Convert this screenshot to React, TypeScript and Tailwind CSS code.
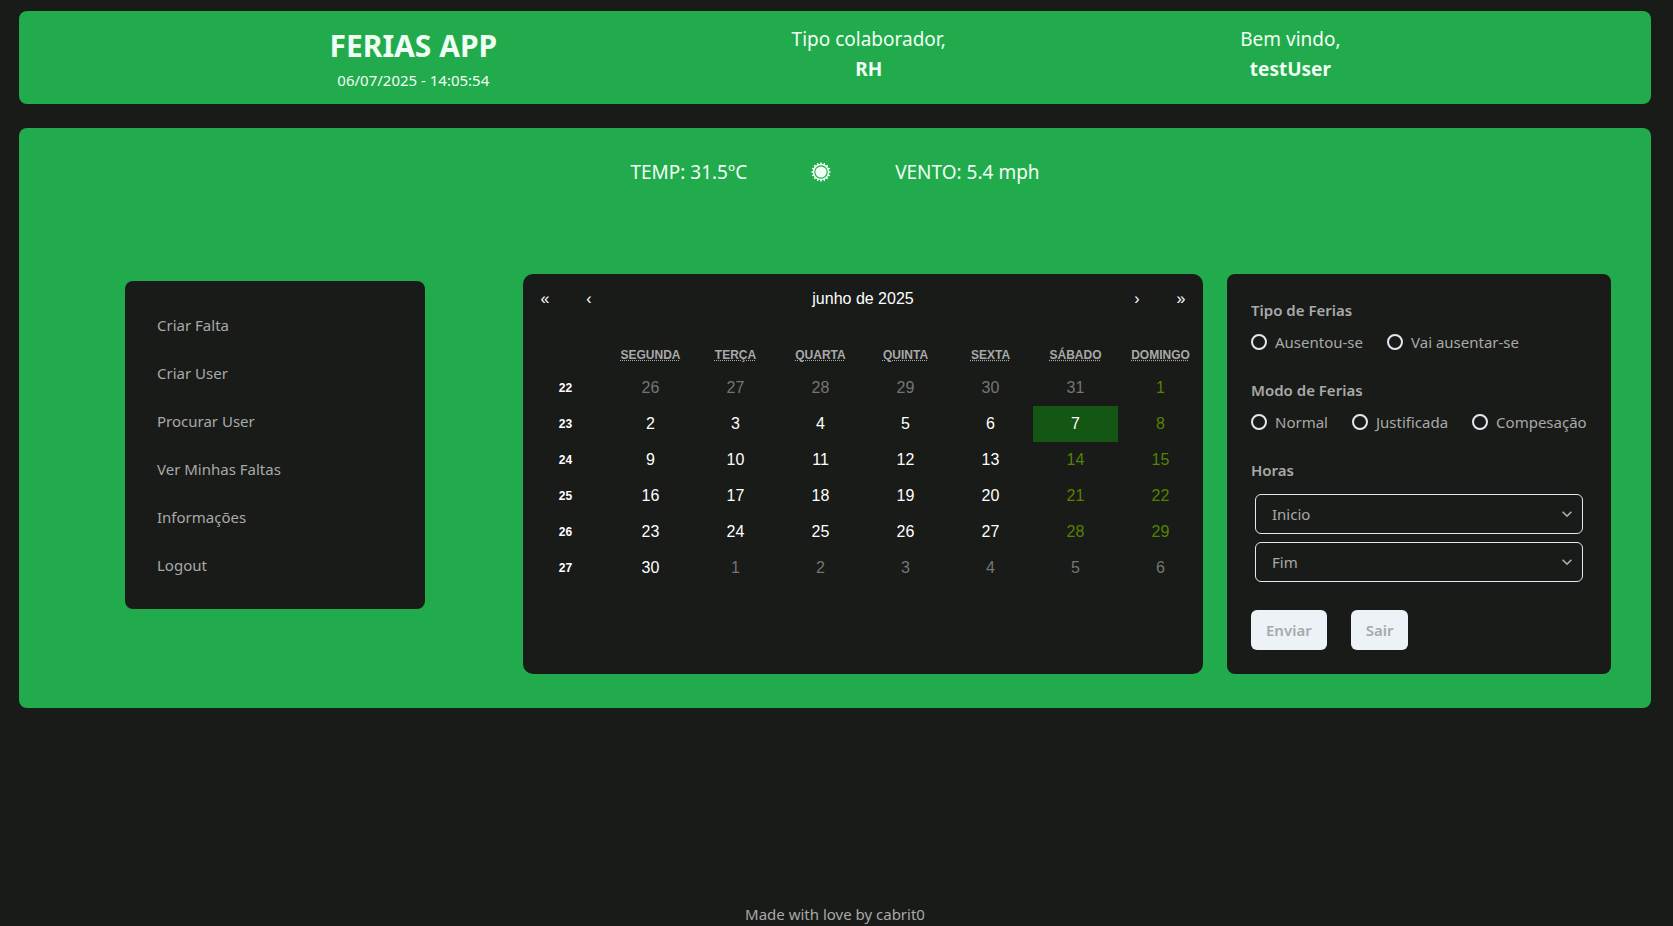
import React, { useState } from "react";

const menuItems = [
  "Criar Falta",
  "Criar User",
  "Procurar User",
  "Ver Minhas Faltas",
  "Informações",
  "Logout",
];

const weekdays = ["segunda", "terça", "quarta", "quinta", "sexta", "sábado", "domingo"];

const FIRST_WEEK = 22;
const DAYS_IN_MAY = 31;
const DAYS_IN_JUNE = 30;

type Day = { label: number; offset: number; outside: boolean };

function buildWeeks(): Day[][] {
  const weeks: Day[][] = [];
  for (let w = 0; w < 6; w++) {
    const week: Day[] = [];
    for (let d = 0; d < 7; d++) {
      const offset = w * 7 + d - 5;
      if (offset < 1) week.push({ label: DAYS_IN_MAY + offset, offset, outside: true });
      else if (offset > DAYS_IN_JUNE) week.push({ label: offset - DAYS_IN_JUNE, offset, outside: true });
      else week.push({ label: offset, offset, outside: false });
    }
    weeks.push(week);
  }
  return weeks;
}

const weeks = buildWeeks();

function dayColor(day: Day, column: number, selected: boolean): string {
  if (selected) return "bg-[#145614] text-white";
  if (day.outside) return "text-[#757575]";
  if (column >= 5) return "text-[#568203]";
  return "text-white";
}

function SunIcon() {
  const teeth = Array.from({ length: 16 }, (_, i) => i * 22.5);
  return (
    <svg viewBox="0 0 20 20" className="size-5" role="img" aria-label="Sol">
      <circle cx="10" cy="10" r="5.6" fill="currentColor" />
      <circle cx="10" cy="10" r="7.5" fill="none" stroke="currentColor" strokeWidth="1.5" />
      {teeth.map((angle) => (
        <path key={angle} d="M8.9 2.4 L9.5 0.3 H10.5 L11.1 2.4 Z" fill="currentColor" transform={`rotate(${angle} 10 10)`} />
      ))}
    </svg>
  );
}

function Header() {
  return (
    <header className="flex items-start justify-evenly rounded-lg bg-[#22ab4c] px-4 pt-[13px] pb-3 text-center text-[#f0fff4]">
      <div>
        <h1 className="text-[30px] leading-[44px] font-bold">FERIAS APP</h1>
        <p className="text-[15px] leading-6">06/07/2025 - 14:05:54</p>
      </div>
      <div className="text-[19px] leading-[30px]">
        <p>Tipo colaborador,</p>
        <p className="font-bold">RH</p>
      </div>
      <div className="text-[19px] leading-[30px]">
        <p>Bem vindo,</p>
        <p className="font-bold">testUser</p>
      </div>
    </header>
  );
}

function Menu() {
  return (
    <nav className="mt-[7px] w-[300px] justify-self-center self-start rounded-lg bg-[#191b18] px-8 py-5">
      <ul>
        {menuItems.map((item) => (
          <li key={item}>
            <a href="#" className="block py-3 leading-6">
              {item}
            </a>
          </li>
        ))}
      </ul>
    </nav>
  );
}

function Calendar() {
  const [selected, setSelected] = useState(7);
  const navButton = "h-11 w-11 text-center";
  return (
    <section className="min-w-0 rounded-[10px] bg-[#191b18] pt-[3px] font-['Liberation_Sans',Arial,sans-serif] text-base text-white">
      <div className="mb-[15px] flex h-11">
        <button type="button" aria-label="Ano anterior" className={navButton}>«</button>
        <button type="button" aria-label="Mês anterior" className={navButton}>‹</button>
        <button type="button" className="grow">junho de 2025</button>
        <button type="button" aria-label="Próximo mês" className={navButton}>›</button>
        <button type="button" aria-label="Próximo ano" className={navButton}>»</button>
      </div>
      <table className="w-full table-fixed border-collapse text-center">
        <thead>
          <tr className="h-[34px] text-xs text-[#a9a9a9] uppercase">
            <td></td>
            {weekdays.map((name) => (
              <th key={name} scope="col" className="p-0 pt-1 font-bold">
                <abbr title={name} className="underline decoration-dotted">{name}</abbr>
              </th>
            ))}
          </tr>
        </thead>
        <tbody>
          {weeks.map((week, w) => (
            <tr key={w} className="h-9">
              <th scope="row" className="p-0 text-xs font-bold">{FIRST_WEEK + w}</th>
              {week.map((day, d) => (
                <td key={day.offset} className="p-0">
                  <button
                    type="button"
                    onClick={() => setSelected(day.offset)}
                    className={`block h-9 w-full ${dayColor(day, d, day.offset === selected)}`}
                  >
                    {day.label}
                  </button>
                </td>
              ))}
            </tr>
          ))}
        </tbody>
      </table>
    </section>
  );
}

function RadioRow({ legend, name, options }: { legend: string; name: string; options: string[] }) {
  return (
    <fieldset className="mb-6">
      <legend className="mb-2 block leading-6 font-semibold">{legend}</legend>
      <div className="flex gap-6">
        {options.map((option) => (
          <label key={option} className="flex items-center gap-2 leading-6 whitespace-nowrap">
            <input
              type="radio"
              name={name}
              value={option}
              className="size-4 shrink-0 appearance-none rounded-full border-2 border-[#e2e8f0] checked:border-[5px]"
            />
            {option}
          </label>
        ))}
      </div>
    </fieldset>
  );
}

function HourSelect({ label }: { label: string }) {
  return (
    <div className="relative">
      <select
        aria-label={label}
        className="h-10 w-full appearance-none rounded-md border border-[#e2e8f0] bg-transparent px-4"
      >
        <option>{label}</option>
      </select>
      <svg viewBox="0 0 24 24" aria-hidden="true" className="pointer-events-none absolute inset-y-0 right-1.5 my-auto size-5">
        <path fill="currentColor" d="M16.59 8.59L12 13.17 7.41 8.59 6 10l6 6 6-6z" />
      </svg>
    </div>
  );
}

function AbsenceForm() {
  const action = "h-10 rounded-md bg-[#edf2f7] px-[15px] font-semibold text-[#a9a9a9]";
  return (
    <form className="rounded-lg bg-[#191b18] p-6" onSubmit={(e) => e.preventDefault()}>
      <RadioRow legend="Tipo de Ferias" name="tipo" options={["Ausentou-se", "Vai ausentar-se"]} />
      <RadioRow legend="Modo de Ferias" name="modo" options={["Normal", "Justificada", "Compesação"]} />
      <fieldset className="mb-7">
        <legend className="mb-3 block leading-6 font-semibold">Horas</legend>
        <div className="flex flex-col gap-2 px-1">
          <HourSelect label="Inicio" />
          <HourSelect label="Fim" />
        </div>
      </fieldset>
      <div className="flex gap-6">
        <button type="submit" className={action}>Enviar</button>
        <button type="button" className={action}>Sair</button>
      </div>
    </form>
  );
}

export default function App() {
  return (
    <div className="flex min-h-screen flex-col bg-[#191b18] pt-[11px] pr-[22px] pl-[19px] font-['Noto_Sans','Open_Sans',sans-serif] text-[15px] text-[#a9a9a9]">
      <Header />
      <main className="mt-6 rounded-lg bg-[#22ab4c] pt-[29px] pb-[34px]">
        <div className="flex items-center justify-center gap-16 text-[19px] leading-[30px] text-[#f0fff4]">
          <p>TEMP: 31.5ºC</p>
          <SunIcon />
          <p>VENTO: 5.4 mph</p>
        </div>
        <div className="mt-[87px] grid grid-cols-[448fr_680fr_384px] gap-6 pr-10 pl-8">
          <Menu />
          <Calendar />
          <AbsenceForm />
        </div>
      </main>
      <footer className="mt-auto text-center leading-6">Made with love by cabrit0</footer>
    </div>
  );
}
